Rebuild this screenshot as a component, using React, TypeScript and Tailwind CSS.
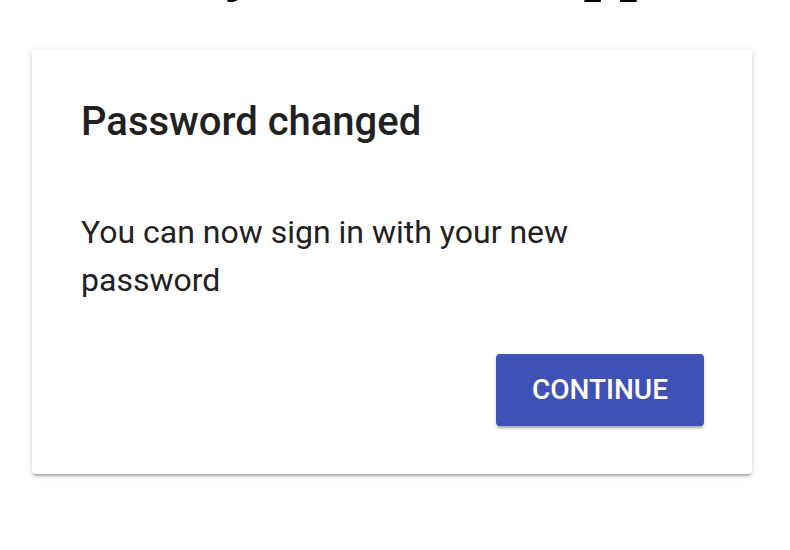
import React from "react";

export default function App() {
  return (
    <div className="min-h-[550px] w-[790px] overflow-hidden bg-white">
      <div className="flex w-[784px] justify-center pl-[36px]">
        <h1
          className="mt-[-65px] h-[64px] whitespace-nowrap text-[64px] font-bold leading-[64px] text-black"
          style={{ fontFamily: '"Liberation Serif", "Times New Roman", serif' }}
        >
          My Awesome App
        </h1>
      </div>
      <div
        className="ml-[32px] mt-[50px] flex w-[720px] flex-col rounded-[4px] bg-white shadow-[0_3px_3px_-1px_rgba(0,0,0,0.3),0_1px_8px_0_rgba(0,0,0,0.12)]"
        style={{ fontFamily: 'Roboto, "Liberation Sans", Arial, sans-serif' }}
      >
        <h2 className="px-[49px] pt-[40px] text-[40px] font-medium leading-[64px] text-[#212121]">
          Password changed
        </h2>
        <p className="mt-[54px] w-[560px] pl-[49px] text-[32px] leading-[48px] text-[#212121]">
          You can now sign in with your new password
        </p>
        <div className="flex justify-end px-[48px] pb-[48px] pt-[50px]">
          <button className="h-[72px] w-[208px] rounded-[4px] bg-[#3f51b5] text-[28px] font-medium uppercase tracking-[0px] text-white shadow-[0_3px_2px_-1px_rgba(0,0,0,0.25),0_2px_4px_0_rgba(0,0,0,0.14)]">
            Continue
          </button>
        </div>
      </div>
    </div>
  );
}
